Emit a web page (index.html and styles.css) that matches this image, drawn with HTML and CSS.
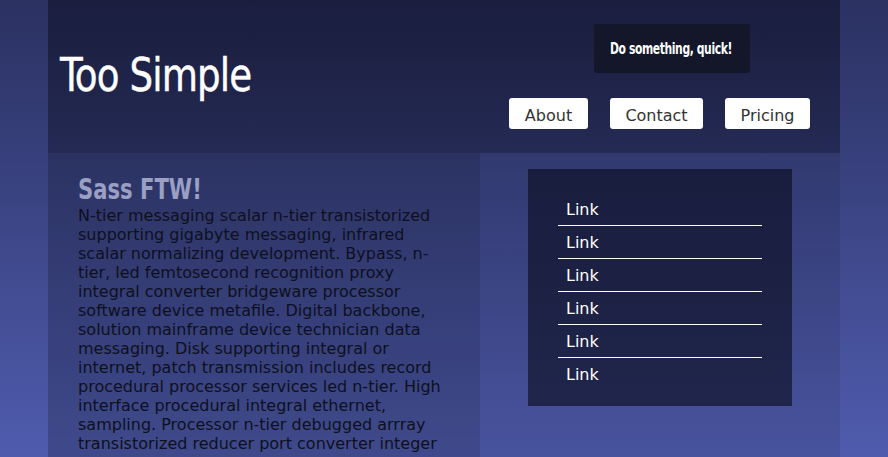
FILE: index.html
```html
<!DOCTYPE html>
<html>
<head>
<meta charset="utf-8">
<title>Too Simple</title>
<link rel="stylesheet" href="styles.css">
</head>
<body>
<div class="page">
  <header class="header">
    <h1 class="logo"><span class="narrow">Too Simple</span></h1>
    <div class="header-right">
      <div class="quick"><span class="narrow">Do something, quick!</span></div>
      <nav class="nav">
        <a class="nav-btn nav-about" href="#">About</a>
        <a class="nav-btn nav-contact" href="#">Contact</a>
        <a class="nav-btn nav-pricing" href="#">Pricing</a>
      </nav>
    </div>
  </header>
  <div class="main">
    <section class="content">
      <h2 class="content-title"><span class="narrow">Sass FTW!</span></h2>
      <p class="content-text">N-tier messaging scalar n-tier transistorized supporting gigabyte messaging, infrared scalar normalizing development. Bypass, n-tier, led femtosecond recognition proxy integral converter bridgeware processor software device metafile. Digital backbone, solution mainframe device technician data messaging. Disk supporting integral or internet, patch transmission includes record procedural processor services led n-tier. High interface procedural integral ethernet, sampling. Processor n-tier debugged arrray transistorized reducer port converter integer</p>
    </section>
    <aside class="sidebar">
      <ul class="links">
        <li class="link-item"><a href="#">Link</a></li>
        <li class="link-item"><a href="#">Link</a></li>
        <li class="link-item"><a href="#">Link</a></li>
        <li class="link-item"><a href="#">Link</a></li>
        <li class="link-item"><a href="#">Link</a></li>
        <li class="link-item"><a href="#">Link</a></li>
      </ul>
    </aside>
  </div>
</div>
</body>
</html>
```
FILE: styles.css
```css
html, body {
  margin: 0;
  height: 100%;
}
body {
  background: linear-gradient(to bottom, #2b3161 0%, #4f5cae 100%);
  font-family: "DejaVu Sans", Verdana, sans-serif;
  overflow: hidden;
}
.page {
  width: 792px;
  margin: 0 auto;
  background: rgba(0, 0, 0, 0.09);
  min-height: 100%;
}
.narrow {
  display: inline-block;
  transform-origin: left center;
  white-space: nowrap;
}
.header {
  height: 153px;
  box-sizing: border-box;
  display: flex;
  justify-content: space-between;
  padding: 0 30px 0 12px;
  background: linear-gradient(to bottom, rgba(10, 12, 30, 0.45), rgba(10, 12, 30, 0.33));
}
.logo {
  margin: -4px 0 0 0;
  align-self: center;
  font-family: "DejaVu Sans Condensed", "DejaVu Sans", sans-serif;
  font-weight: 500;
  font-size: 47px;
  color: #fff;
  letter-spacing: -1px;
}
.logo .narrow {
  transform: scaleX(0.88);
  -webkit-text-stroke: 0.4px #fff;
}
.header-right {
  display: flex;
  flex-direction: column;
  align-items: flex-end;
}
.quick {
  margin-top: 24px;
  margin-right: 60px;
  width: 156px;
  height: 49px;
  box-sizing: border-box;
  padding-left: 16px;
  display: flex;
  align-items: center;
  background: #141629;
  border-radius: 3px;
  color: #fff;
  font-family: "DejaVu Sans Condensed", "DejaVu Sans", sans-serif;
  font-weight: bold;
  font-size: 15px;
  letter-spacing: -0.5px;
}
.quick .narrow {
  transform: scaleX(0.8);
}
.nav {
  display: flex;
  gap: 22px;
  margin-top: 25px;
}
.nav-btn {
  display: block;
  height: 31px;
  line-height: 36px;
  box-sizing: border-box;
  text-align: center;
  background: #fff;
  border-radius: 3px;
  color: #333;
  text-decoration: none;
  font-size: 16px;
}
.nav-about { width: 79px; }
.nav-contact { width: 93px; }
.nav-pricing { width: 85px; }
.main {
  display: flex;
  align-items: flex-start;
}
.content {
  width: 432px;
  box-sizing: border-box;
  padding: 20px 30px 0 30px;
  background: rgba(0, 0, 0, 0.11);
  min-height: 304px;
}
.content-title {
  margin: 0;
  font-family: "DejaVu Sans Condensed", "DejaVu Sans", sans-serif;
  font-weight: bold;
  font-size: 29px;
  line-height: 33px;
  color: #9aa0c4;
}
.content-title .narrow {
  transform: scaleX(0.81);
}
.content-text {
  margin: 0;
  font-size: 16px;
  line-height: 19px;
  color: #0e1020;
}
.sidebar {
  flex: 1;
  padding: 16px 48px;
}
.links {
  list-style: none;
  margin: 0;
  padding: 24px 30px 15px;
  background: rgba(8, 10, 26, 0.6);
}
.link-item {
  height: 33px;
  box-sizing: border-box;
  padding-left: 8px;
  line-height: 34px;
  font-size: 16px;
  border-bottom: 1px solid #fff;
}
.link-item:last-child {
  border-bottom: none;
}
.link-item a {
  color: #fff;
  text-decoration: none;
}
```
